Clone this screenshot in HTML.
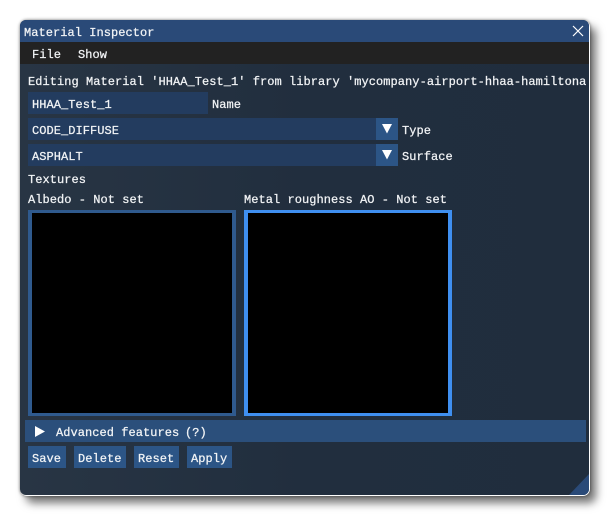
<!DOCTYPE html>
<html>
<head>
<meta charset="utf-8">
<style>
html,body{margin:0;padding:0;background:#fff;}
body{width:610px;height:516px;position:relative;overflow:hidden;font-family:"Liberation Mono","DejaVu Sans Mono",monospace;font-size:12px;letter-spacing:0.05px;color:#f2f4f6;}
div{position:absolute;box-sizing:border-box;}
.t{white-space:pre;line-height:14px;height:14px;margin-top:1px;-webkit-text-stroke:0.25px #f2f4f6;}
.f{background:#233c5f;}
.a{background:#2c5586;}
.b{background:#2c5586;height:22px;top:446px;}
</style>
</head>
<body>
<div style="left:20px;top:20px;width:570px;height:476px;border-radius:7px;box-shadow:6px 7px 9px rgba(0,0,0,0.55),0 0 3px rgba(0,0,0,0.55);"></div>
<div style="left:20px;top:20px;width:569px;height:475px;border-radius:6px;overflow:hidden;background:linear-gradient(90deg,#283544 0%,#212e3e 50%,#202d3d 100%);">
  <div style="left:0;top:0;width:569px;height:22px;background:#2a4a78;"></div>
  <div style="left:0;top:22px;width:569px;height:22px;background:#222222;"></div>
  <svg style="position:absolute;left:549px;top:454px" width="20" height="21"><polygon points="20,0 20,21 0,21" fill="#2a4a78"/></svg>
</div>

<div class="t" style="left:24px;top:25px;">Material Inspector</div>
<svg style="position:absolute;left:572px;top:25px" width="12" height="12"><path d="M1 1L11 11M11 1L1 11" stroke="#fff" stroke-width="1.2" fill="none"/></svg>
<div class="t" style="left:32px;top:47px;">File</div>
<div class="t" style="left:78px;top:47px;">Show</div>

<div style="left:28px;top:73px;width:558px;height:17px;overflow:hidden;"><div class="t" style="left:0;top:1px;">Editing Material 'HHAA_Test_1' from library 'mycompany-airport-hhaa-hamiltonairport'</div></div>

<div class="f" style="left:28px;top:92px;width:180px;height:22px;"></div>
<div class="t" style="left:32px;top:97px;">HHAA_Test_1</div>
<div class="t" style="left:212px;top:97px;">Name</div>

<div class="f" style="left:28px;top:118px;width:348px;height:22px;"></div>
<div class="a" style="left:376px;top:118px;width:22px;height:22px;"></div>
<svg style="position:absolute;left:381px;top:124px" width="12" height="11"><polygon points="1,0 11,0 6,9.5" fill="#fff"/></svg>
<div class="t" style="left:32px;top:123px;">CODE_DIFFUSE</div>
<div class="t" style="left:402px;top:123px;">Type</div>

<div class="f" style="left:28px;top:144px;width:348px;height:22px;"></div>
<div class="a" style="left:376px;top:144px;width:22px;height:22px;"></div>
<svg style="position:absolute;left:381px;top:150px" width="12" height="11"><polygon points="1,0 11,0 6,9.5" fill="#fff"/></svg>
<div class="t" style="left:32px;top:149px;">ASPHALT</div>
<div class="t" style="left:402px;top:149px;">Surface</div>

<div class="t" style="left:28px;top:172px;">Textures</div>
<div class="t" style="left:28px;top:192px;">Albedo - Not set</div>
<div class="t" style="left:244px;top:192px;">Metal roughness AO - Not set</div>

<div style="left:28px;top:210px;width:208px;height:206px;background:#000;border:solid #2f5a8e;border-width:3px 4px;"></div>
<div style="left:244px;top:210px;width:208px;height:206px;background:#000;border:solid #3f8ff0;border-width:3px 4px;"></div>

<div style="left:25px;top:420px;width:561px;height:22px;background:#2b4f7b;"></div>
<svg style="position:absolute;left:34px;top:425px" width="12" height="13"><polygon points="1,1 11,6.5 1,12" fill="#fff"/></svg>
<div class="t" style="left:56px;top:425px;">Advanced features</div>
<div class="t" style="left:185px;top:425px;">(?)</div>

<div class="b" style="left:28px;width:38px;"></div>
<div class="t" style="left:32px;top:451px;">Save</div>
<div class="b" style="left:74px;width:52px;"></div>
<div class="t" style="left:78px;top:451px;">Delete</div>
<div class="b" style="left:134px;width:45px;"></div>
<div class="t" style="left:138px;top:451px;">Reset</div>
<div class="b" style="left:187px;width:45px;"></div>
<div class="t" style="left:191px;top:451px;">Apply</div>
</body>
</html>
